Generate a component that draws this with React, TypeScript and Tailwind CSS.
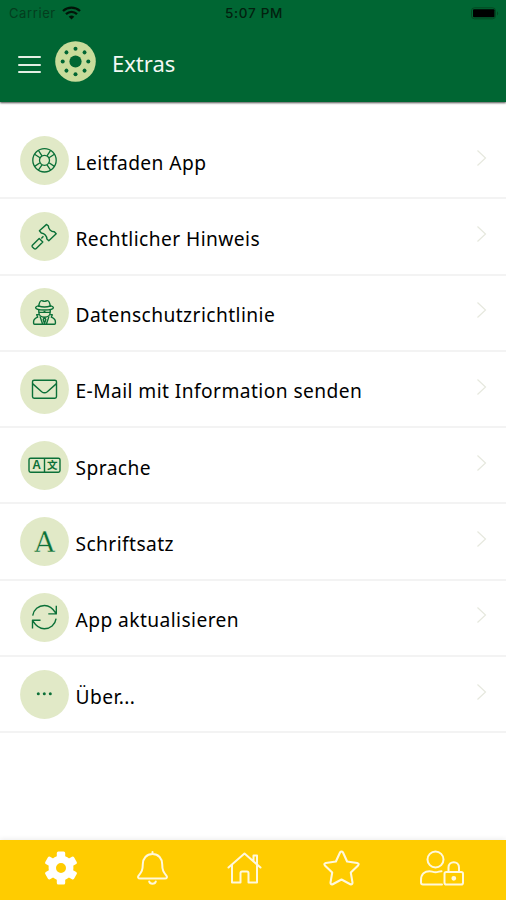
import type { ReactNode } from "react";

const green = "#0b7038";

const LifeRing = () => (
  <g strokeWidth="1.3">
    <circle cx="24.5" cy="24.3" r="11.7" />
    <circle cx="24.5" cy="24.3" r="5" />
    <path d="M18.4 14.4l3.6 5.4M14.6 18.2l5.400 3.600M30.600 14.400L27 19.800M34.400 18.200l-5.400 3.600M18.400 34.200l3.600-5.400M14.600 30.400l5.400-3.600M30.600 34.200L27 28.800M34.400 30.400l-5.400-3.600" />
  </g>
);

const Gavel = () => (
  <g>
    <path d="M19.4 18.7l7.2-6.3 1.8 1.600c-.2 3 2.600 5.600 5.900 5.800l1.900 2-7.400 7-1.900-1.800c0-3-2.500-5.600-5.600-6z" />
    <path d="M23.400 24.200l-2.100 2.200" />
    <path d="M12.400 33.200l6.800-6.800 3.600 3.600-6.800 6.800q-1 .7-2-.3l-1.600-1.500q-.8-.9 0-1.800z" />
  </g>
);

const Spy = () => (
  <g>
    <path d="M18.600 18.800c.4-3 1.200-6.200 3-6.200 1 0 1.800.8 2.900.8s1.900-.8 2.900-.8c1.800 0 2.600 3.200 3 6.200" />
    <path d="M18.600 17.600c-1.600.5-3 1.200-3 1.900 0 1.600 4 2.500 8.900 2.500s8.900-.9 8.900-2.500c0-.7-1.400-1.400-3-1.900M18.600 18c3.600 1.200 8.200 1.200 11.800 0" />
    <path d="M18.800 22v2.200c0 3 2.600 5 5.700 5s5.700-2 5.700-5V22M18.800 24.400h4.600l1.100-.8 1.100.8h4.600" />
    <path d="M18.900 26.600l-2.200.2 1 2.400c-2.800 1.100-4.100 2.500-4.100 4.600v1.400q0 1 1 1h19.800q1 0 1-1v-1.400c0-2.100-1.300-3.500-4.100-4.600l1-2.400-2.200-.2M20 28.400l2.500 7.400M29 28.400l-2.500 7.400M24.500 29.500l-1.300 2 1.300 4 1.300-4z" />
  </g>
);

const Envelope = () => (
  <g>
    <rect x="12.500" y="15.200" width="24" height="18" rx="1.600" />
    <path d="M12.500 18.600l9.200 8.100q2.800 2.200 5.600 0l9.200-8.100" />
  </g>
);

const Language = () => (
  <g>
    <rect x="9" y="17.200" width="31" height="14" rx="1.600" />
    <path d="M24.500 17.200v14" />
    <text x="16.700" y="28.300" textAnchor="middle" fontSize="12" fontWeight="700" fill={green} stroke="none" className="font-['Liberation_Sans',sans-serif]">A</text>
    <text x="32.200" y="28.200" textAnchor="middle" fontSize="10.500" fontWeight="700" fill={green} stroke="none" className="font-['Noto_Sans_CJK_SC',sans-serif]">文</text>
  </g>
);

const Typeface = () => (
  <text x="24.500" y="34.500" textAnchor="middle" fontSize="28" fill={green} stroke="#e1e9c7" strokeWidth="0.4" className="font-['DejaVu_Serif',serif]">A</text>
);

const Refresh = () => (
  <g>
    <path d="M12.700 22.600C13.600 16.500 18.500 12.500 24.500 12.500c4.500 0 8 2.300 11.300 7.600M36.300 12.700v8.200h-8" />
    <path d="M36.100 25.600C35.200 31.700 30.300 35.700 24.300 35.700c-4.500 0-8-2.300-11.300-7.600M12.500 35.500v-8.200h8" />
  </g>
);

const Dots = () => (
  <g fill={green} stroke="none">
    <circle cx="18.300" cy="23.700" r="1.500" />
    <circle cx="24.300" cy="23.700" r="1.500" />
    <circle cx="30.300" cy="23.700" r="1.500" />
  </g>
);

const items: { label: string; icon: ReactNode }[] = [
  { label: "Leitfaden App", icon: <LifeRing /> },
  { label: "Rechtlicher Hinweis", icon: <Gavel /> },
  { label: "Datenschutzrichtlinie", icon: <Spy /> },
  { label: "E-Mail mit Information senden", icon: <Envelope /> },
  { label: "Sprache", icon: <Language /> },
  { label: "Schriftsatz", icon: <Typeface /> },
  { label: "App aktualisieren", icon: <Refresh /> },
  { label: "Über...", icon: <Dots /> },
];

function StatusBar() {
  return (
    <div className="grid h-[27px] grid-cols-3 items-center pr-[7px] pl-[9px] font-['Inter','Liberation_Sans',sans-serif] text-[13px] text-[#03210f]">
      <div className="flex items-center gap-[6px]">
        <span className="tracking-[0.6px] text-[#043d1e]">Carrier</span>
        <svg className="-mt-[2px]" width="19" height="14" viewBox="0 0 19 14" fill="none" stroke="#021408" strokeWidth="2.300">
          <path d="M1 5c4.800-4.600 12.200-4.600 17 0M4 8.200c3.200-3 7.800-3 11 0" />
          <path d="M9.500 13.500L6.700 10.700q2.800-2.300 5.600 0z" fill="#021408" stroke="none" />
        </svg>
      </div>
      <span className="text-center text-[13.500px] font-medium tracking-[0.700px]">5:07 PM</span>
      <svg className="-mt-[1px] justify-self-end" width="28" height="13" viewBox="0 0 28 13">
        <rect x="0.500" y="0.800" width="24" height="11" rx="3" fill="none" stroke="#044922" />
        <rect x="2" y="2.300" width="21.500" height="8" rx="1" fill="#000" />
        <path d="M26 4.200q2.300 2.200 0 4.300z" fill="#044922" />
      </svg>
    </div>
  );
}

function Header() {
  return (
    <header className="h-[102px] shrink-0 bg-[#006633] shadow-[0_1px_2px_rgba(0,0,0,0.7)]">
      <StatusBar />
      <div className="flex h-[70px] items-center pl-[18px]">
        <button className="mt-[5px] flex w-[23px] flex-col gap-[5.500px]" aria-label="Menü">
          <span className="h-[2px] rounded bg-[#e4efe4]" />
          <span className="h-[2px] rounded bg-[#e4efe4]" />
          <span className="h-[2px] rounded bg-[#e4efe4]" />
        </button>
        <svg className="-mt-[1px] ml-[14px]" width="41" height="41" viewBox="-20.500 -20.500 41 41">
          <circle r="20.300" fill="#c9dc9b" />
          <circle r="6.100" fill="#006633" />
          {[0, 45, 90, 135, 180, 225, 270, 315].map((a) => (
            <circle key={a} cy="-12.800" r="2" fill="#006633" transform={`rotate(${a})`} />
          ))}
        </svg>
        <h1 className="mt-[3px] ml-[16px] font-['Noto_Sans',sans-serif] text-[22px] text-[#f4f8f4]">Extras</h1>
      </div>
    </header>
  );
}

function Row({ label, icon }: { label: string; icon: ReactNode }) {
  return (
    <li className="flex h-[76.300px] items-center border-b-2 border-[#f3f3f3] pr-[19px] pl-5">
      <svg className="shrink-0" width="49" height="49" viewBox="0 0 49 49" fill="none" stroke={green} strokeWidth="1.400" strokeLinejoin="round">
        <circle cx="24.500" cy="24.500" r="24.400" fill="#e1e9c7" stroke="none" />
        {icon}
      </svg>
      <span className="mt-[5.500px] ml-[6.500px] grow font-['Noto_Sans',sans-serif] text-[19.200px] tracking-[0.420px] text-black">{label}</span>
      <svg className="-mt-[5px]" width="11" height="18" viewBox="0 0 11 18" fill="none" stroke="#e6e8de" strokeWidth="1.200">
        <path d="M1.500 1.500L9.500 9l-8 7.500" />
      </svg>
    </li>
  );
}

function TabBar() {
  return (
    <nav className="flex h-[60px] shrink-0 items-center justify-between bg-[#ffcc00] pr-[42px] pb-1 pl-11 shadow-[0_-1px_5px_rgba(0,0,0,0.080)]">
      <svg width="34" height="34" viewBox="-17 -17 34 34" fill="#fff">
        <circle r="8.700" fill="none" stroke="#fff" strokeWidth="7.400" />
        {[0, 60, 120, 180, 240, 300].map((a) => (
          <rect key={a} x="-4.200" y="-16.600" width="8.400" height="8" rx="1.500" transform={`rotate(${a})`} />
        ))}
      </svg>
      <svg className="-ml-[1px]" width="31" height="34" viewBox="0 0 31 34" fill="none" stroke="#fff8dc" strokeWidth="2" strokeLinecap="round" strokeLinejoin="round">
        <path d="M15.500 1v2M15.500 3c-6 0-9.700 4.500-9.700 10.200 0 6-1.300 7.800-4.300 11.600-1 1.500-.2 2.700 1.500 2.700h25c1.700 0 2.500-1.200 1.500-2.700-3-3.800-4.300-5.600-4.300-11.600C25.200 7.500 21.500 3 15.500 3z" />
        <path d="M12.200 30.500c.7 3 5.900 3 6.600 0" />
      </svg>
      <svg className="-ml-[1px]" width="35" height="34" viewBox="0 0 35 34" fill="none" stroke="#fff8dc" strokeWidth="2" strokeLinecap="round" strokeLinejoin="round">
        <path d="M1.500 16.500L17.500 2.500l16 14M26.500 10V4.500h3.500v9M5 13.800V31.500h8.500V22q0-1.500 1.500-1.500h5q1.500 0 1.500 1.500v9.500H30V13.800" />
      </svg>
      <svg className="ml-[1px]" width="37" height="36" viewBox="0 0 37 36" fill="none" stroke="#fff8dc" strokeWidth="2.100" strokeLinejoin="round">
        <path d="M17 2.500q1.500-2 3 0l4.100 9 10.100 1.500q2.300.7.900 2.400l-7.300 7.200 1.700 10q0 2.300-2.200 1.600l-8.800-4.700-8.800 4.700q-2.200.7-2.200-1.600l1.700-10-7.300-7.200q-1.400-1.700.9-2.400l10.100-1.500z" />
      </svg>
      <svg width="44" height="36" viewBox="0 0 44 36" fill="none" stroke="#fff8dc" strokeWidth="2" strokeLinecap="round" strokeLinejoin="round">
        <circle cx="15.500" cy="9.500" r="8" />
        <path d="M22 34.500H3q-2 0-2-2v-2.500c0-6 4-8.800 8.500-8.800 2 0 3.500 1 6 1s4-1 6-1" />
        <rect x="24.500" y="22" width="18.500" height="12.500" rx="1.800" />
        <path d="M28.500 22v-4.500c0-7 10.500-7 10.500 0V22" />
        <circle cx="33.800" cy="28.300" r="1.400" fill="#fff8dc" />
      </svg>
    </nav>
  );
}

export default function App() {
  return (
    <div className="flex h-[900px] w-[506px] flex-col overflow-hidden bg-white">
      <Header />
      <ul className="grow pt-[21px]">
        {items.map((item) => (
          <Row key={item.label} label={item.label} icon={item.icon} />
        ))}
      </ul>
      <TabBar />
    </div>
  );
}
